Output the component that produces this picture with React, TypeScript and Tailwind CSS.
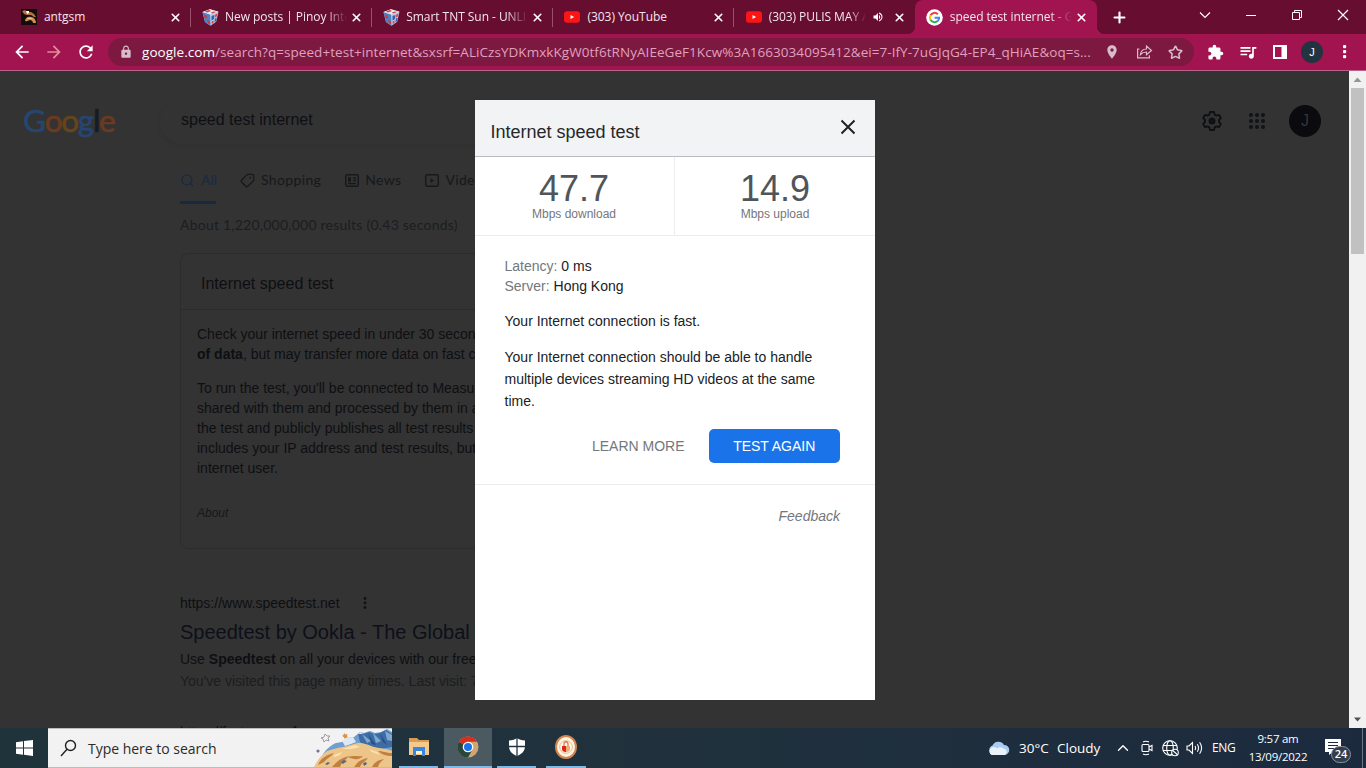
import React from "react";
import { Tag, Search, X, Plus, ChevronUp, Star } from "lucide-react";
import { MdExtension, MdQueueMusic, MdLock, MdLocationOn, MdRefresh, MdArrowBack, MdArrowForward, MdVolumeUp } from "react-icons/md";

const ui = "font-['Open_Sans','Noto_Sans',sans-serif]";
const arial = "font-['Liberation_Sans',Arial,sans-serif]";

function AntIcon() {
  return (
    <svg width="16" height="16" viewBox="0 0 16 16">
      <rect width="16" height="16" fill="#120c0c" />
      <path d="M1 2l3-1 2 2 4 0 3 2 2 3-2 0-3-2-4 0-3-1z" fill="#b9713a" />
      <path d="M4 12c0-3 3-5 6-4 3 0 5 3 5 6h-3c0-2-2-3-3-3-2 0-2 2-5 1z" fill="#d58d4d" />
      <path d="M6 10c2-2 5-1 6 0-2 0-4 0-6 0z" fill="#f0c08a" />
      <path d="M5 2l3 0 0 2-2 1z" fill="#fff" />
    </svg>
  );
}

function CubeIcon() {
  return (
    <svg width="17" height="17" viewBox="0 0 17 17">
      <path d="M0.500 3L8 0.300l8.500 2.400-2.300 10L8.500 16.700 3 13z" fill="#b9c6dd" />
      <path d="M.5 3L8 5.500l.5 11L3 13z" fill="#4f7fc4" />
      <path d="M.5 3L8 .300l8.500 2.400L8 5.500z" fill="#e6e9f1" />
      <path d="M3 2.600l4-1.500 2 .8-4 1.700zM9 3.500l3-1 2 .6-4 1.400z" fill="#d23a37" />
      <path d="M1.500 5.500l3 1 .5 3-2.500-1zM5 11l3 1.500v3l-2-1.500z" fill="#d23a37" />
      <path d="M9.500 7l3-1-.5 4-2.500 1.500zM13 9.500l1.700-.6-.8 3.300-1.500 1z" fill="#3262b4" />
      <path d="M13.300 5.400l2-.8-.5 3-1.800.8zM9.600 12.500l2-1-.2 2.500-1.600 1z" fill="#d8443f" />
    </svg>
  );
}

function YouTubeIcon() {
  return (
    <svg width="16" height="12" viewBox="0 0 16 12">
      <rect y="0.300" width="16" height="11.400" rx="3" fill="#fb1515" />
      <path d="M6.500 3.900v4.200l3.600-2.100z" fill="#fff" />
    </svg>
  );
}

function GoogleG() {
  return (
    <svg width="17" height="17" viewBox="0 0 17 17" fill="none" strokeWidth="2">
      <circle cx="8.500" cy="8.500" r="8.300" fill="#fff" />
      <path d="M11.800 5.200A4.600 4.600 0 0 0 4.400 6.400" stroke="#ea4335" />
      <path d="M4.400 6.400a4.600 4.600 0 0 0 0 4.200" stroke="#fbbc05" />
      <path d="M4.400 10.600a4.600 4.600 0 0 0 7.200 1.400" stroke="#34a853" />
      <path d="M11.600 12a4.600 4.600 0 0 0 1.500-3.300H8.600" stroke="#4285f4" />
    </svg>
  );
}

type TabInfo = { icon: React.ReactNode; title: string; active?: boolean; fade?: boolean; sound?: boolean; sep?: boolean };

const tabs: TabInfo[] = [
  { icon: <AntIcon />, title: "antgsm", sep: true },
  { icon: <CubeIcon />, title: "New posts | Pinoy Inte", fade: true, sep: true },
  { icon: <CubeIcon />, title: "Smart TNT Sun - UNLI", fade: true, sep: true },
  { icon: <YouTubeIcon />, title: "(303) YouTube", sep: true },
  { icon: <YouTubeIcon />, title: "(303) PULIS MAY A", fade: true, sound: true },
  { icon: <GoogleG />, title: "speed test internet - G", active: true, fade: true },
];

function Tab({ t }: { t: TabInfo }) {
  return (
    <div className={"relative flex h-[34px] w-[181.200px] shrink-0 items-center pl-[11px] pr-[9px] " + (t.active ? "rounded-t-lg bg-[#a11450]" : "")}>
      <span className="flex w-[17px] shrink-0 justify-center">{t.icon}</span>
      <span
        className={
          "ml-[6.500px] flex-1 overflow-hidden whitespace-nowrap text-[12px] leading-4 tracking-[-0.050px] text-[#f3e6ec] " +
          (t.fade ? "[mask-image:linear-gradient(to_right,#000_82%,transparent)]" : "")
        }
      >
        {t.title}
      </span>
      {t.sound && <MdVolumeUp className="mx-1.5 size-[12px] shrink-0 text-white" />}
      <X className="ml-[3px] size-[13px] shrink-0 text-white" strokeWidth={3} />
      {t.sep && <span className="absolute right-0 top-2 h-[19px] w-px bg-[#97506d]" />}
      {t.active && (
        <>
          <span className="absolute -left-2 bottom-0 size-2 bg-[radial-gradient(circle_at_0_0,#670d30_8px,#a11450_8.500px)]" />
          <span className="absolute -right-2 bottom-0 size-2 bg-[radial-gradient(circle_at_100%_0,#670d30_8px,#a11450_8.500px)]" />
        </>
      )}
    </div>
  );
}

function TabStrip() {
  return (
    <div className="flex h-[34px] bg-[#670d30] pl-[9.400px] text-white">
      {tabs.map((t) => (
        <Tab key={t.title} t={t} />
      ))}
      <div className="flex flex-1 items-center pl-[14px]">
        <Plus className="size-[17px]" strokeWidth={3} />
      </div>
      <div className="flex items-center gap-[30px] pb-[5px] pr-[17px]">
        <svg width="12" height="12" viewBox="0 0 12 12" fill="none" stroke="#fff" strokeWidth="1.100"><path d="M1 3.500l5 5 5-5" /></svg>
        <svg className="ml-[4px]" width="12" height="12" viewBox="0 0 12 12" stroke="#fff"><path d="M1 6.500h10" /></svg>
        <svg className="ml-[4px]" width="12" height="12" viewBox="0 0 12 12" fill="none" stroke="#fff"><path d="M1.500 3.500h7v7h-7zM3.500 3.500v-2h7v7h-2" /></svg>
        <svg className="ml-[4px]" width="12" height="12" viewBox="0 0 12 12" stroke="#fff" strokeWidth="1.200"><path d="M1 1l10 10M11 1L1 11" /></svg>
      </div>
    </div>
  );
}

function Toolbar() {
  return (
    <div className="flex h-[37px] items-center border-b border-[#b8648a] bg-[#a11450] pl-[12px]">
      <MdArrowBack className="size-[20px] text-white" />
      <MdArrowForward className="ml-[12px] size-[20px] text-[#e08f9a]" />
      <MdRefresh className="ml-[12px] size-[20px] text-white" />
      <div className="ml-[12px] flex h-[28px] w-[1086px] items-center rounded-full bg-[#7d1941] pl-[11px] text-[#d7bccb]">
        <MdLock className="size-[14px]" />
        <div className="ml-[9px] w-[952px] overflow-hidden whitespace-nowrap text-[13.500px] leading-5 tracking-[0.050px] text-[#dfa0bd]">
          <span className="text-white">google.com</span>/search?q=speed+test+internet&amp;sxsrf=ALiCzsYDKmxkKgW0tf6tRNyAIEeGeF1Kcw%3A1663034095412&amp;ei=7-IfY-7uGJqG4-EP4_qHiAE&amp;oq=s...
        </div>
        <MdLocationOn className="ml-[10px] size-[16px]" />
        <svg className="ml-[16px]" width="17" height="16" viewBox="0 0 17 16" fill="none" stroke="currentColor" strokeWidth="1.200">
          <path d="M3.500 5H1.600v8.800h11.800v-2.600" />
          <path d="M4.500 10.500c.4-3.600 2.700-5.400 6-5.500V2l5 4.500-5 4.300V8c-2.600 0-4.400.7-6 2.500z" />
        </svg>
        <Star className="ml-[15px] size-[15px]" strokeWidth={2.500} />
      </div>
      <div className="flex flex-1 items-center text-white">
        <MdExtension className="ml-[13px] size-[17px]" />
        <MdQueueMusic className="ml-[14px] size-[20px]" />
        <svg className="ml-[15px]" width="14" height="14" viewBox="0 0 14 14"><path d="M0 0h14v14H0zM2 2v10h6.500V2z" fill="#fff" fillRule="evenodd" /></svg>
        <span className={"ml-[14px] flex size-[22px] items-center justify-center rounded-full bg-[#21343f] text-[11px] text-white " + arial}>J</span>
        <svg className="ml-[20px]" width="4" height="14" viewBox="0 0 4 14" fill="#fff"><rect y="0" width="3.200" height="3.200" rx="1" /><rect y="5" width="3.200" height="3.200" rx="1" /><rect y="10" width="3.200" height="3.200" rx="1" /></svg>
      </div>
    </div>
  );
}

function SearchHeader() {
  return (
    <header className="flex h-[72px] items-start pt-[29px]">
      <div className="flex h-[42px] w-[136px] items-center pl-[23px] font-['Lato',sans-serif] text-[31.500px] leading-none tracking-[-1.300px] [-webkit-text-stroke:0.700px_currentColor]">
        <span className="text-[#264571]">G</span>
        <span className="text-[#6b3a20]">o</span>
        <span className="text-[#65451b]">o</span>
        <span className="text-[#264571]">g</span>
        <span className="text-[#171b26]">l</span>
        <span className="text-[#6b3a20]">e</span>
      </div>
      <div className="ml-[24px] h-[44px] w-[692px] rounded-full pl-[21px] pt-[10px] text-[16px] leading-5 text-[#0e0f13] shadow-[0_2px_4px_rgba(0,0,0,0.080)]">
        speed test internet
      </div>
      <div className="ml-auto flex items-center gap-[23px] pr-[28px] pt-[5px] text-[#0f1013]">
        <svg className="-mr-px" width="22" height="22" viewBox="0 0 22 22" fill="none" stroke="currentColor" strokeWidth="1.800" strokeLinejoin="round">
          <path d="M9 2h4l.6 2.600 1.800 1 2.500-.8 2 3.400L18 10v2l1.900 1.800-2 3.400-2.500-.8-1.800 1L13 20H9l-.6-2.600-1.800-1-2.500.8-2-3.400L4 12v-2L2.100 8.200l2-3.400 2.500.8 1.800-1z" />
          <circle cx="11" cy="11" r="2" strokeWidth="3" />
        </svg>
        <div className="mr-[1px] grid grid-cols-3 gap-[2px] pl-[4px]">
          {Array.from({ length: 9 }, (_, i) => (
            <span key={i} className="size-[4px] rounded-full bg-[#111319]" />
          ))}
        </div>
        <span className="flex size-[32px] items-center justify-center rounded-full bg-[#0a0a0f] text-[16px] text-[#34353a]">J</span>
      </div>
    </header>
  );
}

function ResultsPage() {
  return (
    <main className="h-full w-[1349px] shrink-0 overflow-hidden bg-[#333333] text-[#0e0f12]">
      <SearchHeader />
      <div className="pl-[180px]">
        <nav className="flex h-[61px] gap-[24px] pt-[28px] font-['Lato',sans-serif] text-[14px] leading-[18px] tracking-[0.350px] text-[#16181b]">
          <span className="flex h-[33px] w-[36px] items-start gap-[6px] border-b-[3px] border-[#17293f] tracking-normal text-[#182a43]">
            <Search className="mt-[2px] size-[15px] shrink-0" />All
          </span>
          <span className="flex gap-[6px]"><Tag className="mt-[2px] size-[15px] scale-x-[-1]" />Shopping</span>
          <span className="flex gap-[6px]">
            <svg className="mt-[3px]" width="14" height="13" viewBox="0 0 14 13" fill="none" stroke="currentColor" strokeWidth="1.400"><rect x=".7" y=".7" width="12.600" height="11.600" rx="1.500" /><path d="M3 4h3M3 5.500h3M3 7h3M8 4h3M8 6.500h3M3 9.500h8" /></svg>
            News
          </span>
          <span className="flex gap-[6px]">
            <svg className="mt-[3px]" width="14" height="13" viewBox="0 0 14 13" fill="none" stroke="currentColor" strokeWidth="1.400"><rect x=".7" y=".7" width="12.600" height="11.600" rx="1.500" /><path d="M5.500 4v5l3.500-2.500z" fill="currentColor" stroke="none" /></svg>
            Videos
          </span>
        </nav>
        <p className="pt-[11px] font-['Lato',sans-serif] text-[14px] leading-5 tracking-[0.230px] text-[#1b1d21]">About 1,220,000,000 results (0.43 seconds)</p>
        <section className="mt-[18px] h-[296px] w-[652px] rounded-lg border border-[#2b2c2e]">
          <h2 className="h-[56px] border-b border-[#2b2c2e] pl-[20px] pt-[20px] text-[16px] leading-5">Internet speed test</h2>
          <div className="whitespace-nowrap pl-[16px] pt-[14px] text-[14px] leading-5">
            <p>Check your internet speed in under 30 secon</p>
            <p><b>of data</b>, but may transfer more data on fast c</p>
            <p className="mt-[14px]">To run the test, you'll be connected to Measu</p>
            <p>shared with them and processed by them in a</p>
            <p>the test and publicly publishes all test results</p>
            <p>includes your IP address and test results, but</p>
            <p>internet user.</p>
            <p className="mt-[25px] text-[12px] italic leading-5 text-[#15171a]">About</p>
          </div>
        </section>
        <article className="whitespace-nowrap pt-[44px] text-[14px]">
          <p className="flex items-center leading-5">
            https://www.speedtest.net
            <svg className="ml-[23px]" width="4" height="12" viewBox="0 0 4 12" fill="#111216"><circle cx="2" cy="1.500" r="1.400" /><circle cx="2" cy="6" r="1.400" /><circle cx="2" cy="10.500" r="1.400" /></svg>
          </p>
          <h3 className="pt-[6px] text-[20px] leading-[26px] text-[#0d1019]">Speedtest by Ookla - The Global</h3>
          <p className="pt-[3px] leading-[22px]">Use <b>Speedtest</b> on all your devices with our free</p>
          <p className="leading-[22px] text-[#1b1d20]">You've visited this page many times. Last visit: 7</p>
        </article>
        <p className="mt-[30px] flex text-[14px] leading-5">
          https://fast.com
          <svg className="ml-[18px] mt-[4px]" width="4" height="12" viewBox="0 0 4 12" fill="#111216"><circle cx="2" cy="1.500" r="1.400" /></svg>
        </p>
      </div>
    </main>
  );
}

function Stat({ value, label, divided }: { value: string; label: string; divided?: boolean }) {
  return (
    <div className={"flex w-[200px] flex-col items-center pt-[13px] " + (divided ? "border-r border-[#ebedef] pr-px" : "")}>
      <span className="text-[36px] leading-[38px] text-[#50555b]">{value}</span>
      <span className="-mt-[2px] text-[12px] leading-[16px] text-[#74777c]">{label}</span>
    </div>
  );
}

function SpeedDialog() {
  return (
    <div role="dialog" className="h-[600px] w-[400px] bg-white text-[14px] text-[#202124]">
      <div className="flex h-[57px] items-start justify-between border-b border-[#b9bcc3] bg-[#f1f3f4] pl-[15.500px] pr-[19px]">
        <h1 className="pt-[20px] text-[18px] leading-6 text-[#26282c]">Internet speed test</h1>
        <svg className="mt-[19px]" width="16" height="16" viewBox="0 0 16 16" stroke="#202124" strokeWidth="2"><path d="M1.500 1.500l13 13M14.500 1.500l-13 13" /></svg>
      </div>
      <div className="flex h-[79px] border-b border-[#ebedef]">
        <Stat value="47.7" label="Mbps download" divided />
        <Stat value="14.9" label="Mbps upload" />
      </div>
      <div className="h-[249px] border-b border-[#ebedef] pl-[29.500px] pr-[35px] pt-[20px]">
        <p className="leading-5"><span className="text-[#74777c]">Latency:</span> 0 ms</p>
        <p className="leading-5"><span className="text-[#74777c]">Server:</span> Hong Kong</p>
        <p className="mt-[14px] leading-[22px]">Your Internet connection is fast.</p>
        <p className="mt-[14px] leading-[22px]">Your Internet connection should be able to handle multiple devices streaming HD videos at the same time.</p>
        <div className="mt-[17px] flex items-center justify-end gap-[24px]">
          <button className="text-[14px] text-[#74777c]">LEARN MORE</button>
          <button className="h-[34px] w-[131.500px] rounded-[5px] bg-[#1a73e8] text-[14px] text-white">TEST AGAIN</button>
        </div>
      </div>
      <p className="pr-[35px] pt-[21px] text-right italic leading-5 text-[#74777c]">Feedback</p>
    </div>
  );
}

function ScrollBar() {
  return (
    <div className="flex w-[17px] flex-col items-center bg-[#f1f1f1]">
      <svg width="17" height="17" viewBox="0 0 17 17"><path d="M4.500 11L8.500 6.500l4 4.500z" fill="#93959b" /></svg>
      <div className="h-[166px] w-[13px] bg-[#c1c1c1]" />
      <svg className="mt-auto" width="17" height="17" viewBox="0 0 17 17"><path d="M5 6.500h7l-3.500 4z" fill="#505050" /></svg>
    </div>
  );
}

function SearchArt() {
  return (
    <svg width="80" height="38" viewBox="0 0 80 38">
      <path d="M10 27C14 20 19 16 24 14l6-1 6-4 6-1 6-5 4 1 6-2 5 2 6-1 6-3 5 3v24H8z" fill="#6f9fce" />
      <path d="M30 12l6-3 5-1 3 5-5 2-6 2zM46 5l3-2 4 5-4 2z" fill="#dce9f4" />
      <path d="M46 5l5 0 6-2 5 2 6-1 6-3 6 4v13l-12 2-14-2-6-5z" fill="#3e6da6" />
      <path d="M50 5l5 9 4-2zM61 4l3 10 5-2zM73 2l2 9 5 1V6z" fill="#7fa9d4" />
      <path d="M56 5l4 10 4 1zM68 4l3 9 4 3z" fill="#28507f" />
      <path d="M2 38C5 32 9 26 15 22c6-2 10-3 16-4 6-1 9-3 15-4 7 0 10 2 16 4 7 2 12 1 18 4v16z" fill="#edc48a" />
      <path d="M6 36c2-6 8-10 16-12-3 4-7 5-10 9zM20 38c6-7 10-9 17-11-4 5-7 5-9 11zM36 28c5-2 10 0 15-1-3 4-9 4-15 1zM42 38c4-6 8-8 14-9-3 4-6 4-8 9zM60 38c3-6 7-7 12-8-3 3-5 4-6 8zM66 22c5 0 8 2 14 2v3c-5 0-10-1-14-5z" fill="#c0803f" />
      <path d="M29 33l3-2 3 1-4 3zM13 35l3-2 2 1-3 2zM51 34l3-1 1 2-3 2z" fill="#56698a" />
      <path d="M30 20l13-4 5 2-9 2zM57 20l8 3 3 3-8-3zM22 26l8-3-2 3-6 2z" fill="#ffe3ab" />
      <path d="M25 6l1-3 2 2 3 0-2 2 1 3-3-1-2 2-1-3-2-1z" fill="none" stroke="#8b8494" strokeWidth=".8" transform="translate(-13 2)" />
      <path d="M32 4l1.500 1.500L35.500 5l-.5 2 1 1.500-2 .2-1.500 1-.7-1.700-1.800-1 1.500-1z" fill="#dc914b" />
      <circle cx="6" cy="22" r="1.600" fill="#7b7395" />
    </svg>
  );
}

function TaskIcon({ children, width, active }: { children: React.ReactNode; width: string; active?: boolean }) {
  return (
    <div className={"flex h-[40px] items-center justify-center border-b-2 border-[#7fb9e6] " + width + (active ? " bg-[#4b5961]" : "")}>{children}</div>
  );
}

function TaskBar() {
  return (
    <footer className={"flex h-[40px] items-center bg-gradient-to-r from-[#1f333b] via-[#20313d] to-[#1c2a3e] text-white " + ui}>
      <div className="flex w-[48px] justify-center">
        <svg width="17" height="16" viewBox="0 0 17 16" fill="#fff"><path d="M0 2.300L7 1.300v6.200H0zM8 1.100L17 0v7.500H8zM0 8.500h7v6.200l-7-1zM8 8.500h9V16l-9-1.200z" /></svg>
      </div>
      <div className="flex h-[40px] w-[344px] items-center border-y border-[#b9bdc0] bg-[#f2f2f2] pl-[12px] text-[14px] text-[#2b2b2b]">
        <svg width="17" height="18" viewBox="0 0 17 18" fill="none" stroke="#222" strokeWidth="1.400"><circle cx="10.500" cy="6.500" r="5" /><path d="M7 10.300L1 17" /></svg>
        <span className="ml-[11px] flex-1 tracking-[-0.020px]">Type here to search</span>
        <SearchArt />
      </div>
      <div className="ml-[7px] flex">
        <TaskIcon width="w-[39px]">
          <svg width="22" height="20" viewBox="0 0 22 20">
            <path d="M1 1h8l2 2h10v14H1z" fill="#d99c56" /><path d="M1 5h20v13H1z" fill="#f3c98c" />
            <path d="M5 10h12v9h-3v-5H8v5H5z" fill="#3a86dc" /><path d="M8 14h6v3H8z" fill="#fff1ce" />
          </svg>
        </TaskIcon>
        <span className="w-[6px]" />
        <TaskIcon width="w-[48px]" active>
          <svg width="22" height="22" viewBox="0 0 22 22">
            <circle cx="11" cy="11" r="10.500" fill="#cfa673" />
            <path d="M11 11L1.900 5.700A10.500 10.500 0 0 0 11 21.500l4.500-8z" fill="#29463a" />
            <path d="M11 11L1.900 5.700A10.500 10.500 0 0 1 20.100 5.800H11z" fill="#d92d20" />
            <circle cx="11" cy="11" r="5.300" fill="#fff" /><circle cx="11" cy="11" r="4" fill="#1a73e8" />
          </svg>
        </TaskIcon>
        <span className="w-[5px]" />
        <TaskIcon width="w-[39px]">
          <svg width="16" height="18" viewBox="0 0 16 18"><path d="M8 0c2 1.600 4.500 2.400 8 2.500V8c0 5-3 8-8 10-5-2-8-5-8-10V2.500C3.500 2.400 6 1.600 8 0z" fill="#fff" /><path d="M8 0v18M0 8.500h16" stroke="#21343e" strokeWidth="1.300" /></svg>
        </TaskIcon>
        <span className="w-[10px]" />
        <TaskIcon width="w-[40px]">
          <svg width="22" height="24" viewBox="0 0 22 24">
            <ellipse cx="11" cy="12" rx="10" ry="11" fill="#fff2e0" stroke="#d2864f" strokeWidth="2" />
            <circle cx="11" cy="12" r="6.300" fill="#fffaf0" stroke="#e8bd8c" />
            <path d="M9 11V9c0-3 4-3 4 0v2" fill="none" stroke="#df7b51" strokeWidth="1.300" />
            <path d="M7 11h8v4c-2 3-6 3-8 0z" fill="#efad76" /><path d="M7 11h4v6c-2 0-4-1-4-3z" fill="#d52a1d" />
          </svg>
        </TaskIcon>
      </div>
      <div className="ml-auto flex h-full items-center">
        <svg width="23" height="16" viewBox="0 0 23 16"><path d="M6 15a5 5 0 0 1-.5-9.500A6.500 6.500 0 0 1 17 5a5 5 0 0 1 .500 10z" fill="#a9cdf0" /><path d="M5 15a4 4 0 0 1 0-7.500c2-1 4 0 5 1 2-2 5-1.500 6.500 0A3.500 3.500 0 0 1 18 15z" fill="#eaf1fa" /></svg>
        <span className="ml-[9px] w-[38px] whitespace-nowrap text-[13.500px]">30°C</span>
        <span className="w-[57px] text-[13.500px]">Cloudy</span>
        <ChevronUp className="size-[18px]" strokeWidth={1.800} />
        <svg className="ml-[8px]" width="14" height="16" viewBox="0 0 14 16" fill="none" stroke="#fff" strokeWidth="1.100"><rect x="2" y="4.500" width="7" height="7" rx="1" /><path d="M9 7l3-1.500v5L9 9M3 2q3-1.500 6 0M3 14q3 1.500 6 0" /></svg>
        <svg className="ml-[8px]" width="18" height="17" viewBox="0 0 18 17" fill="none" stroke="#fff" strokeWidth="1.100"><circle cx="8" cy="8" r="7.300" /><ellipse cx="8" cy="8" rx="3.300" ry="7.300" /><path d="M1 5.500h14M1 10.500h9" /><circle cx="13" cy="12.500" r="3.300" fill="#1d2b3d" /><path d="M10.800 10.500l4.400 4" /></svg>
        <svg className="ml-[6px]" width="17" height="14" viewBox="0 0 17 14" fill="none" stroke="#fff" strokeWidth="1.100"><path d="M1 5h2l3.500-3.500v11L3 9H1zM9 5q1.300 2 0 4M11.300 3.200q2.500 3.800 0 7.600M13.600 1.300q4 5.700 0 11.400" /></svg>
        <span className="ml-[9px] w-[24px] text-[12px] tracking-[-0.300px]">ENG</span>
        <div className="ml-[9px] w-[66px] pb-[1px] text-center text-[11.500px] leading-[18px] tracking-[-0.250px]">
          <p>9:57 am</p>
          <p>13/09/2022</p>
        </div>
        <div className="relative ml-[14px] h-[28px] w-[37px]">
          <svg width="17" height="16" viewBox="0 0 17 16" className="mt-[5px]"><path d="M0 0h16v13H8l-4 3v-3H0z" fill="#fff" /><path d="M3 3.500h10M3 6.500h10M3 9.500h7" stroke="#1d2b3d" /></svg>
          <span className="absolute left-[6px] top-[12px] flex h-[17px] w-[20px] items-center justify-center rounded-full border border-[#8b929b] bg-[#323e4d] text-[11px] font-semibold">24</span>
        </div>
        <span className="h-full w-px bg-[#6b7681]" />
        <span className="w-[3px]" />
      </div>
    </footer>
  );
}

export default function App() {
  return (
    <div className="flex h-[768px] w-[1366px] flex-col overflow-hidden">
      <div className={ui}>
        <TabStrip />
        <Toolbar />
      </div>
      <div className={"relative flex h-[657px] " + arial}>
        <ResultsPage />
        <ScrollBar />
        <div className="absolute inset-0 flex justify-center pr-[16px] pt-[29px]">
          <SpeedDialog />
        </div>
      </div>
      <TaskBar />
    </div>
  );
}
